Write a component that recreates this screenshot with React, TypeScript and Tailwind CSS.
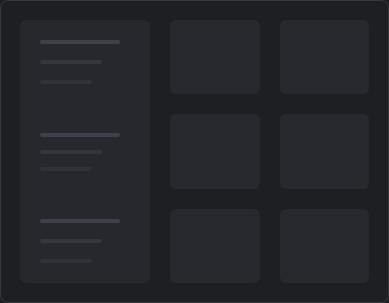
const GROUPS = [
  { gap: 'gap-4' },
  { gap: 'gap-[13px]' },
  { gap: 'gap-4' },
];

function SkeletonGroup({ gap }: { gap: string }) {
  return (
    <div className={`flex flex-col ${gap}`}>
      <div className="h-1 w-[80px] rounded-full bg-[#3d414b]" />
      <div className="h-1 w-[62px] rounded-full bg-[#34373e]" />
      <div className="h-1 w-[52px] rounded-full bg-[#2f3238]" />
    </div>
  );
}

export default function App() {
  return (
    <div className="h-[303px] w-[389px] bg-[#1e1f23]">
      <div className="flex h-full w-full gap-5 rounded-lg border border-[#36383d] bg-[#1e1f23] p-[19px]">
        {/* Sidebar skeleton */}
        <div className="flex w-[130px] flex-col justify-between rounded-md bg-[#26282d] px-5 py-5">
          {GROUPS.map((g, i) => (
            <SkeletonGroup key={i} gap={g.gap} />
          ))}
        </div>

        {/* Tiles */}
        <div className="grid flex-1 grid-cols-2 grid-rows-3 gap-5">
          {Array.from({ length: 6 }).map((_, i) => (
            <div key={i} className="rounded-md bg-[#27292e]" />
          ))}
        </div>
      </div>
    </div>
  );
}
